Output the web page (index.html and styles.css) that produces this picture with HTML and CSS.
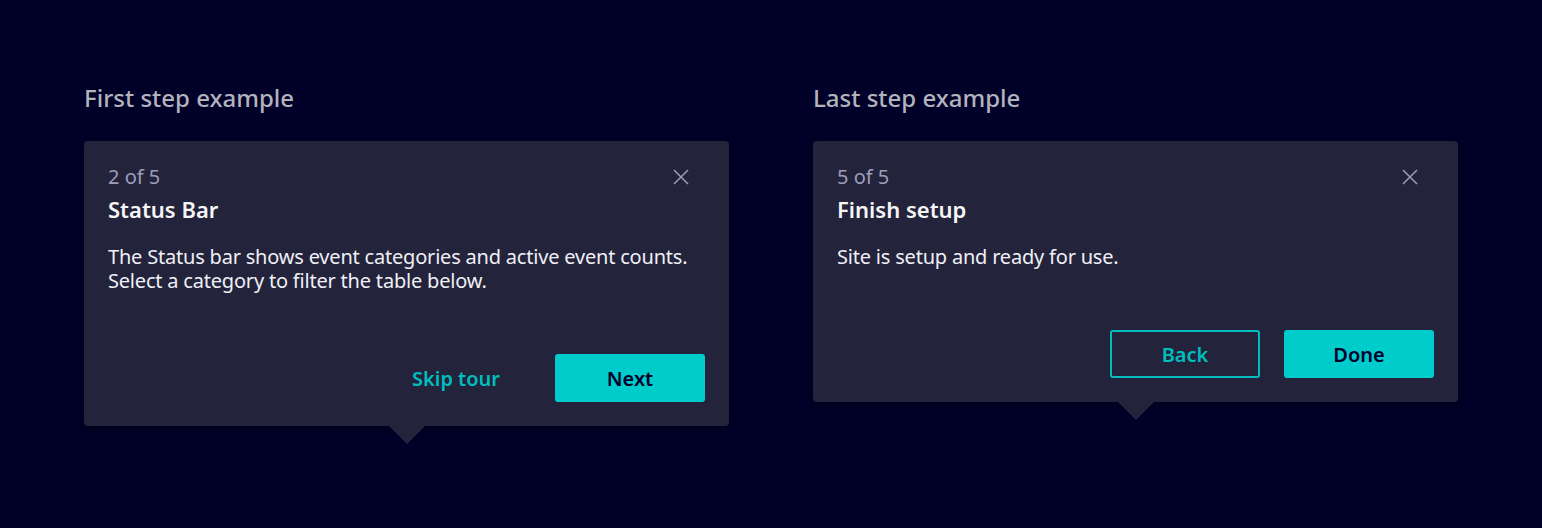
FILE: index.html
```html
<!DOCTYPE html>
<html lang="en">
<head>
<meta charset="utf-8">
<title>Tour examples</title>
<link rel="stylesheet" href="styles.css">
</head>
<body>
<main class="page">
  <section class="example">
    <h2 class="example-title">First step example</h2>
    <div class="tour-card">
      <div class="tour-header">
        <div class="tour-headings">
          <div class="tour-step">2 of 5</div>
          <div class="tour-title">Status Bar</div>
        </div>
        <button class="close-btn" aria-label="Close">
          <svg width="16" height="16" viewBox="0 0 16 16"><path d="M1 1 L15 15 M15 1 L1 15" stroke="currentColor" stroke-width="1.5" fill="none"/></svg>
        </button>
      </div>
      <p class="tour-body">The Status bar shows event categories and active event counts.<br>Select a category to filter the table below.</p>
      <div class="tour-actions">
        <button class="btn btn-tertiary">Skip tour</button>
        <button class="btn btn-primary">Next</button>
      </div>
      <span class="tour-arrow"></span>
    </div>
  </section>
  <section class="example">
    <h2 class="example-title">Last step example</h2>
    <div class="tour-card">
      <div class="tour-header">
        <div class="tour-headings">
          <div class="tour-step">5 of 5</div>
          <div class="tour-title">Finish setup</div>
        </div>
        <button class="close-btn" aria-label="Close">
          <svg width="16" height="16" viewBox="0 0 16 16"><path d="M1 1 L15 15 M15 1 L1 15" stroke="currentColor" stroke-width="1.5" fill="none"/></svg>
        </button>
      </div>
      <p class="tour-body">Site is setup and ready for use.</p>
      <div class="tour-actions">
        <button class="btn btn-secondary">Back</button>
        <button class="btn btn-primary">Done</button>
      </div>
      <span class="tour-arrow"></span>
    </div>
  </section>
</main>
</body>
</html>
```

FILE: styles.css
```css
* { box-sizing: border-box; }
html, body {
  margin: 0;
  padding: 0;
  background: #000028;
  font-family: "Noto Sans", "Open Sans", sans-serif;
  color: #f5f5f5;
}
.page {
  display: flex;
  align-items: flex-start;
  gap: 84px;
  min-height: 528px;
  padding: 83px 0 40px 84px;
}
.example {
  width: 645px;
  display: flex;
  flex-direction: column;
  align-items: flex-start;
}
.example-title {
  margin: 0 0 28px 0;
  font-size: 24px;
  line-height: 30px;
  font-weight: 500;
  color: #b3b3be;
}
.tour-card {
  position: relative;
  width: 645px;
  background: #23233c;
  border-radius: 4px;
  padding: 24px;
  box-shadow: 0 2px 8px rgba(0, 0, 0, 0.35);
}
.tour-header {
  display: flex;
  justify-content: space-between;
  align-items: flex-start;
}
.tour-step {
  font-size: 20px;
  line-height: 24px;
  color: #9d9db9;
}
.tour-title {
  margin-top: 8px;
  font-size: 22px;
  line-height: 24px;
  font-weight: 600;
  color: #f5f5f5;
}
.close-btn {
  width: 32px;
  height: 32px;
  margin: -4px 8px 0 0;
  border: none;
  background: transparent;
  color: #9d9db9;
  display: flex;
  align-items: center;
  justify-content: center;
  padding: 0;
}
.tour-body {
  margin: 24px 0 0 0;
  font-size: 20px;
  line-height: 24px;
  letter-spacing: -0.2px;
  color: #f0f0f5;
}
.tour-actions {
  margin-top: 61px;
  display: flex;
  justify-content: flex-end;
  gap: 24px;
}
.btn {
  width: 150px;
  height: 48px;
  border-radius: 3px;
  font-family: inherit;
  font-size: 20px;
  font-weight: 600;
  border: 2px solid transparent;
  background: transparent;
  padding: 0;
}
.btn-primary {
  background: #00cccc;
  border-color: #00cccc;
  color: #000028;
}
.btn-tertiary {
  color: #00bebe;
}
.btn-secondary {
  border-color: #00bebe;
  color: #00bebe;
}
.tour-arrow {
  position: absolute;
  left: 50%;
  bottom: -18px;
  margin-left: -18px;
  width: 0;
  height: 0;
  border-left: 18px solid transparent;
  border-right: 18px solid transparent;
  border-top: 18px solid #23233c;
}
```
